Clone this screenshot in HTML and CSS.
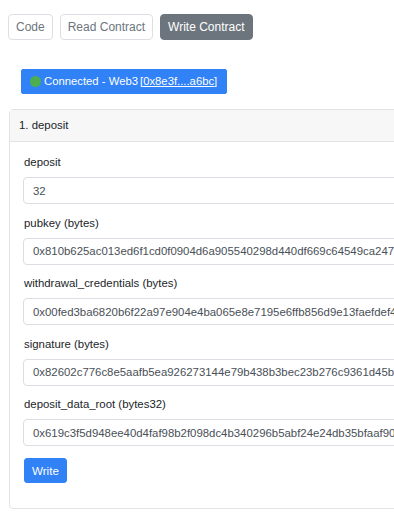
FILE: index.html
```html
<!DOCTYPE html>
<html lang="en">
<head>
<meta charset="utf-8">
<title>Write Contract</title>
<link rel="stylesheet" href="styles.css">
</head>
<body>
<div class="page">
  <nav class="tabs">
    <button class="tab">Code</button>
    <button class="tab">Read Contract</button>
    <button class="tab tab-active">Write Contract</button>
  </nav>

  <div class="status-row">
    <button class="btn-connected"><span class="dot"></span>Connected - Web3 <a class="addr" href="#">[0x8e3f....a6bc]</a></button>
  </div>

  <section class="card">
    <header class="card-header">1. deposit</header>
    <form class="card-body">
      <div class="group">
        <label class="label">deposit</label>
        <input class="field" type="text" value="32">
      </div>
      <div class="group">
        <label class="label">pubkey (bytes)</label>
        <input class="field" type="text" value="0x810b625ac013ed6f1cd0f0904d6a905540298d440df669c64549ca247">
      </div>
      <div class="group">
        <label class="label">withdrawal_credentials (bytes)</label>
        <input class="field" type="text" value="0x00fed3ba6820b6f22a97e904e4ba065e8e7195e6ffb856d9e13faefdef4">
      </div>
      <div class="group">
        <label class="label">signature (bytes)</label>
        <input class="field" type="text" value="0x82602c776c8e5aafb5ea926273144e79b438b3bec23b276c9361d45b">
      </div>
      <div class="group">
        <label class="label">deposit_data_root (bytes32)</label>
        <input class="field" type="text" value="0x619c3f5d948ee40d4faf98b2f098dc4b340296b5abf24e24db35bfaaf90">
      </div>
      <button class="btn-write" type="button">Write</button>
    </form>
  </section>
</div>
</body>
</html>
```

FILE: styles.css
```css
html, body {
  margin: 0;
  padding: 0;
  overflow: hidden;
  background: #ffffff;
}

body {
  font-family: "Liberation Sans", Arial, Helvetica, sans-serif;
  color: #212529;
  font-size: 11.4px;
  line-height: 17px;
}

.page {
  padding: 14px 0 0 8px;
  overflow: hidden;
}

.tabs {
  display: flex;
  gap: 7px;
}

.tab {
  font-family: inherit;
  font-size: 12px;
  line-height: 18px;
  padding: 3px 7px;
  border: 1px solid #dcdfe3;
  border-radius: 4px;
  background: #ffffff;
  color: #6c757d;
  margin: 0;
}

.tab-active {
  background: #6c757d;
  border-color: #6c757d;
  color: #ffffff;
}

.status-row {
  display: flex;
  margin: 29px 0 0 13px;
}

.btn-connected {
  display: flex;
  align-items: center;
  gap: 3px;
  font-family: inherit;
  font-size: 11.3px;
  line-height: 17px;
  padding: 3px 9px 3px 8px;
  border: 1px solid #3182f6;
  border-radius: 2px;
  background: #3182f6;
  color: #ffffff;
  margin: 0;
}

.dot {
  width: 11px;
  height: 11px;
  border-radius: 50%;
  background: #4cae4f;
  display: inline-block;
}

.addr {
  color: #ffffff;
  text-decoration: underline;
  margin-left: -1px;
}

.card {
  margin: 15px -200px 0 1px;
  border: 1px solid #e3e3e3;
  border-radius: 4px;
}

.card-header {
  background: #f7f7f8;
  border-bottom: 1px solid #e3e3e3;
  padding: 7px 9px;
  color: #212529;
}

.card-body {
  display: flex;
  flex-direction: column;
  align-items: flex-start;
  padding: 12px 13px 25px 13px;
  margin: 0;
}

.group {
  display: flex;
  flex-direction: column;
  align-self: stretch;
  margin-bottom: 10.5px;
}

.label {
  margin: 0 0 6px 1px;
}

.field {
  font-family: inherit;
  font-size: 11.4px;
  line-height: 17px;
  height: 27px;
  box-sizing: border-box;
  padding: 4px 9px;
  border: 1px solid #dadde1;
  border-radius: 4px;
  color: #495057;
  background: #ffffff;
  outline: none;
}

.btn-write {
  margin-top: 1.5px;
  margin-left: 1px;
  font-family: inherit;
  font-size: 11.6px;
  line-height: 17px;
  padding: 3px 7px;
  border: 1px solid #3182f6;
  border-radius: 3px;
  background: #3182f6;
  color: #ffffff;
}
```
